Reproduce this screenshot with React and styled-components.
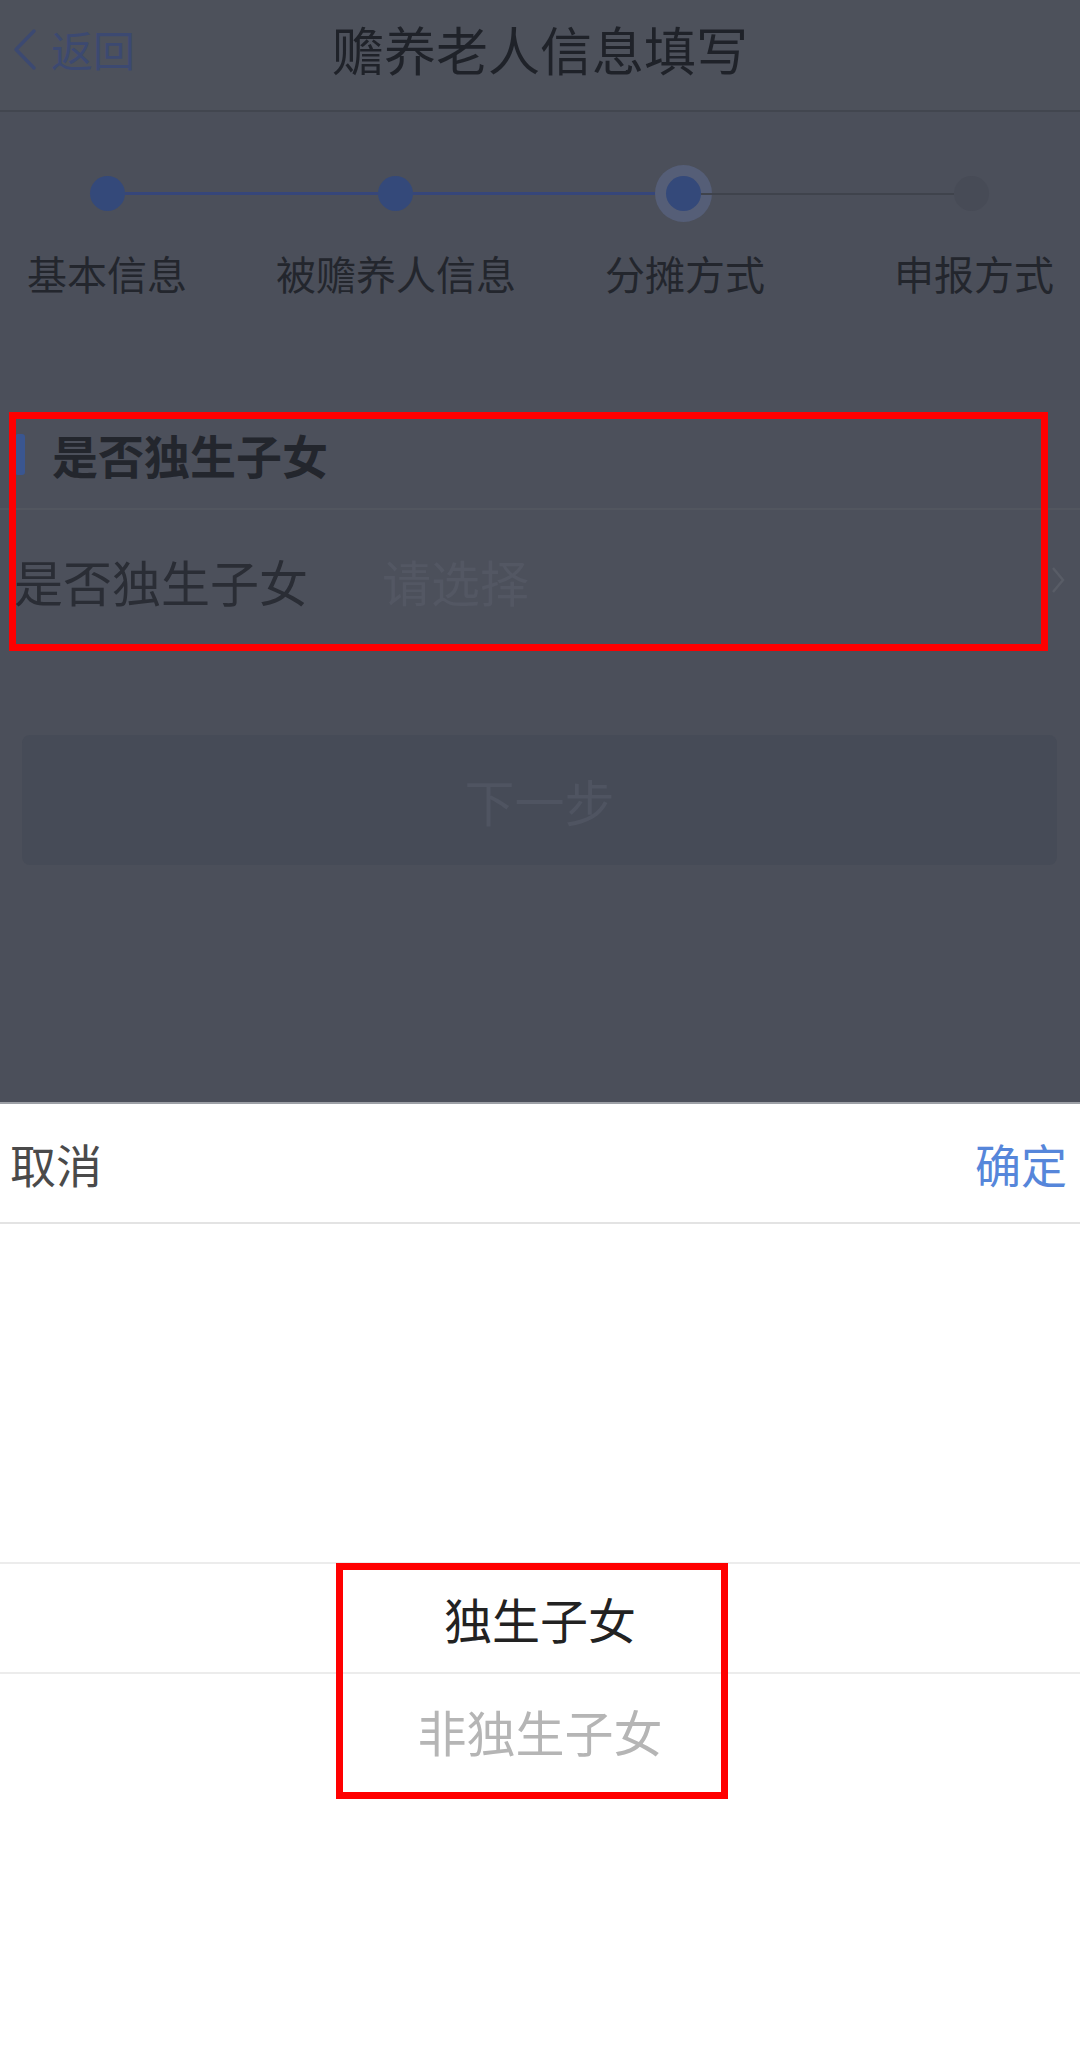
import React from "react";
import styled, { createGlobalStyle } from "styled-components";

const GlobalStyle = createGlobalStyle`
  html, body {
    margin: 0;
    padding: 0;
    background: #ffffff;
  }
  body {
    font-family: "Noto Sans CJK SC", "Noto Sans", sans-serif;
  }
  * {
    box-sizing: border-box;
  }
`;

const Page = styled.div`
  width: 1080px;
  height: 2067px;
  display: flex;
  flex-direction: column;
  overflow: hidden;
`;

const Dimmed = styled.div`
  height: 1102px;
  flex-shrink: 0;
  background: #4b4f5a;
  display: flex;
  flex-direction: column;
`;

const NavBar = styled.header`
  height: 112px;
  display: grid;
  grid-template-columns: 1fr auto 1fr;
  align-items: center;
  padding-bottom: 12px;
  background: #4d515b;
  border-bottom: 2px solid #42464f;
`;

const BackLink = styled.div`
  display: flex;
  align-items: center;
  gap: 14px;
  padding-left: 12px;
  color: #3c4971;
  font-size: 42px;
  line-height: 1;
`;

const NavTitle = styled.h1`
  margin: 0;
  font-size: 52px;
  font-weight: 400;
  color: #1f2229;
  line-height: 1;
`;

const Steps = styled.section`
  padding: 64px 0 104px;
`;

const Track = styled.div`
  display: flex;
  align-items: center;
  padding-left: 90px;
  height: 35px;
`;

const Dot = styled.span`
  width: 35px;
  height: 35px;
  border-radius: 50%;
  flex-shrink: 0;
  background: ${(p) => (p.$pending ? "#474b56" : "#34497a")};
  box-shadow: ${(p) => (p.$active ? "0 0 0 11px #555e77" : "none")};
`;

const Link = styled.span`
  width: 253px;
  height: ${(p) => (p.$done ? "3px" : "2px")};
  background: ${(p) => (p.$done ? "#36467a" : "#3f434c")};
`;

const StepLabels = styled.div`
  display: grid;
  grid-template-columns: repeat(4, 214px);
  column-gap: 75px;
  margin-top: 39px;
`;

const StepLabel = styled.span`
  justify-self: center;
  font-size: 40px;
  line-height: 46px;
  color: #23262d;
  white-space: nowrap;
`;

const Section = styled.section`
  position: relative;
  background: #4c505b;
`;

const SectionHead = styled.div`
  height: 110px;
  display: flex;
  align-items: center;
  gap: 27px;
  padding-left: 15px;
  border-bottom: 2px solid #52565f;
  font-size: 46px;
  font-weight: 700;
  color: #23262d;
`;

const HeadMark = styled.span`
  width: 10px;
  height: 41px;
  border-radius: 3px;
  background: #3a5690;
`;

const FieldRow = styled.div`
  height: 140px;
  display: flex;
  align-items: center;
  padding-left: 14px;
  font-size: 49px;
`;

const FieldLabel = styled.span`
  width: 368px;
  flex-shrink: 0;
  color: #2a2d35;
`;

const FieldValue = styled.span`
  flex: 1;
  color: #535763;
`;

const Chevron = styled.svg`
  width: 16px;
  height: 30px;
  margin-right: 14px;
`;

const Annotation = styled.div`
  position: absolute;
  border: 7px solid #ff0000;
  pointer-events: none;
`;

const NextButton = styled.button`
  margin: 85px 23px 0 22px;
  height: 130px;
  border: none;
  border-radius: 8px;
  background: #464b57;
  color: #4f5461;
  font-family: inherit;
  font-size: 50px;
`;

const Sheet = styled.div`
  flex: 1;
  background: #ffffff;
  border-top: 2px solid #9da0a6;
  display: flex;
  flex-direction: column;
`;

const SheetHeader = styled.div`
  height: 120px;
  display: flex;
  align-items: center;
  justify-content: space-between;
  padding: 0 13px 0 10px;
  border-bottom: 2px solid #e3e3e3;
  font-size: 46px;
`;

const SheetAction = styled.span`
  color: ${(p) => (p.$primary ? "#5686da" : "#4a4a4a")};
`;

const Picker = styled.div`
  position: relative;
  flex: 1;
  padding-top: 338px;
`;

const Option = styled.div`
  height: 112px;
  display: flex;
  align-items: center;
  justify-content: center;
  font-size: ${(p) => (p.$selected ? "48px" : "49px")};
  color: ${(p) => (p.$selected ? "#222222" : "#b5b5b5")};
  border-top: ${(p) => (p.$selected ? "2px solid #ececec" : "none")};
  border-bottom: ${(p) => (p.$selected ? "2px solid #ececec" : "none")};
`;

const steps = ["基本信息", "被赡养人信息", "分摊方式", "申报方式"];
const current = 2;

export default function App() {
  return (
    <>
      <GlobalStyle />
      <Page>
        <Dimmed>
          <NavBar>
            <BackLink>
              <svg width="25" height="43" viewBox="0 0 25 43">
                <path
                  d="M22 3 L4 21.5 L22 40"
                  fill="none"
                  stroke="#3c4971"
                  strokeWidth="3.5"
                  strokeLinecap="round"
                  strokeLinejoin="round"
                />
              </svg>
              返回
            </BackLink>
            <NavTitle>赡养老人信息填写</NavTitle>
            <span />
          </NavBar>

          <Steps>
            <Track>
              {steps.map((s, i) => (
                <React.Fragment key={s}>
                  {i > 0 && <Link $done={i <= current} />}
                  <Dot $active={i === current} $pending={i > current} />
                </React.Fragment>
              ))}
            </Track>
            <StepLabels>
              {steps.map((s) => (
                <StepLabel key={s}>{s}</StepLabel>
              ))}
            </StepLabels>
          </Steps>

          <Section>
            <SectionHead>
              <HeadMark />
              是否独生子女
            </SectionHead>
            <FieldRow>
              <FieldLabel>是否独生子女</FieldLabel>
              <FieldValue>请选择</FieldValue>
              <Chevron viewBox="0 0 16 30">
                <path
                  d="M3 3 L13 15 L3 27"
                  fill="none"
                  stroke="#585c66"
                  strokeWidth="2.5"
                />
              </Chevron>
            </FieldRow>
            <Annotation
              style={{ top: 12, left: 9, width: 1039, height: 239 }}
            />
          </Section>

          <NextButton type="button">下一步</NextButton>
        </Dimmed>

        <Sheet>
          <SheetHeader>
            <SheetAction>取消</SheetAction>
            <SheetAction $primary>确定</SheetAction>
          </SheetHeader>
          <Picker>
            <Option $selected>独生子女</Option>
            <Option>非独生子女</Option>
            <Annotation
              style={{ top: 339, left: 336, width: 392, height: 236 }}
            />
          </Picker>
        </Sheet>
      </Page>
    </>
  );
}
